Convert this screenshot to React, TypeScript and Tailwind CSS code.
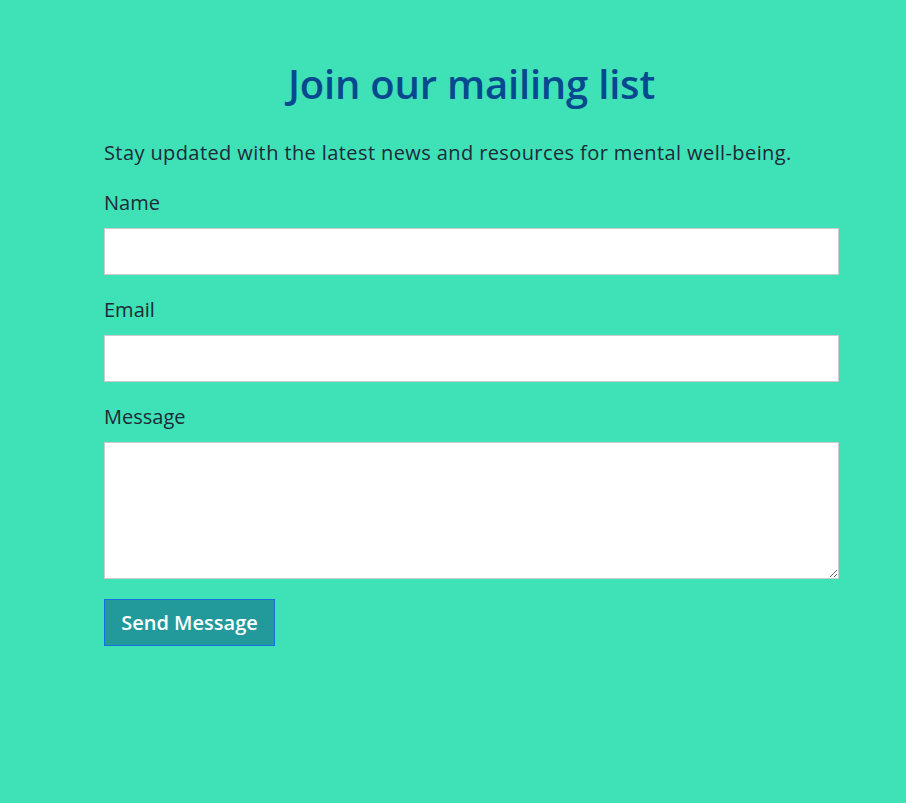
import React from "react";

export default function App() {
  return (
    <div className="min-h-screen bg-[#3fe1b6] font-['Open_Sans',sans-serif] text-[#1d2b36]">
      <div className="ml-[104px] w-[735px] pt-[60px]">
        <h1 className="text-center text-[40px] leading-[48px] font-semibold tracking-[-0.2px] text-[#07498f] mb-[30px]">
          Join our mailing list
        </h1>
        <p className="text-[20px] leading-[30px] tracking-[0.4px] mb-[20px]">
          Stay updated with the latest news and resources for mental well-being.
        </p>
        <form className="flex flex-col">
          <label className="text-[20px] leading-[30px] mb-[10px]">Name</label>
          <input type="text" className="h-[47px] bg-white border border-[#cccccc] mb-[20px]" />
          <label className="text-[20px] leading-[30px] mb-[10px]">Email</label>
          <input type="email" className="h-[47px] bg-white border border-[#cccccc] mb-[20px]" />
          <label className="text-[20px] leading-[30px] mb-[10px]">Message</label>
          <textarea className="h-[137px] bg-white border border-[#cccccc] mb-[20px]" />
          <div>
            <button
              type="button"
              className="h-[47px] w-[171px] bg-[#229a9b] border border-[#1a6fe0] text-white text-[20px] font-semibold"
            >
              Send Message
            </button>
          </div>
        </form>
      </div>
    </div>
  );
}
